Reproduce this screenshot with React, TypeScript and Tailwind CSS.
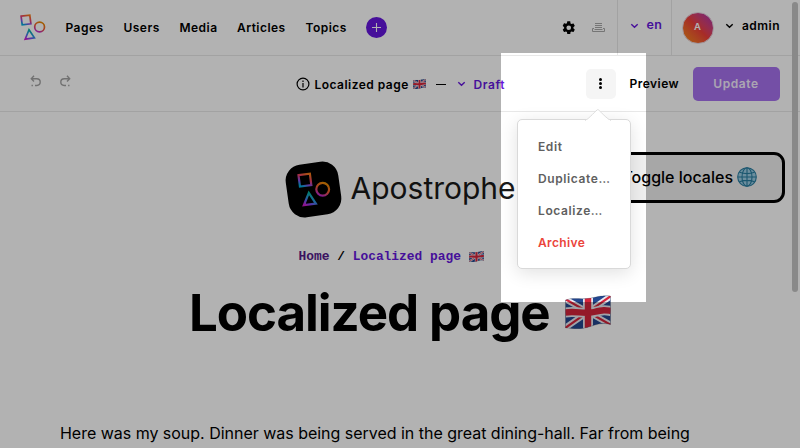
import React, { useId } from "react";

function Flag({ className }: { className: string }) {
  const id = useId();
  const wave = "M.5 5C9 2 16 5 26 3S37 .5 45.5 1V29.5C36 27 31 30 22 32.5S7 33 .5 33Z";
  return (
    <svg viewBox="0 0 46 34" className={className} preserveAspectRatio="none">
      <clipPath id={id}>
        <path d={wave} />
      </clipPath>
      <g clipPath={`url(#${id})`}>
        <rect width="46" height="34" fill="#23478f" />
        <path d="M0 4L46 30M0 33L46 1" stroke="#e9e9ef" strokeWidth="6" />
        <path d="M0 4L46 30M0 33L46 1" stroke="#d5243b" strokeWidth="2.2" />
        <path d="M23 0V34M0 17.5C12 15.5 18 19.5 29 17S40 15 46 16" fill="none" stroke="#e9e9ef" strokeWidth="10" />
        <path d="M23 0V34M0 17.5C12 15.5 18 19.5 29 17S40 15 46 16" fill="none" stroke="#d5243b" strokeWidth="6.4" />
      </g>
      <path d={wave} fill="none" stroke="#00000033" strokeWidth="0.8" />
    </svg>
  );
}

function Shapes({ className }: { className: string }) {
  const id = useId();
  return (
    <svg viewBox="0 0 26 27" className={className} fill="none" strokeWidth="1.7">
      <defs>
        <linearGradient id={`${id}s`} x1="0.8" y1="0" x2="0.3" y2="1">
          <stop stopColor="#f57a16" />
          <stop offset=".4" stopColor="#e83e68" />
          <stop offset=".72" stopColor="#8a4de8" />
          <stop offset="1" stopColor="#00a8d8" />
        </linearGradient>
        <linearGradient id={`${id}c`} x1="0.7" y1="0" x2="0.2" y2="1">
          <stop stopColor="#e78b00" />
          <stop offset=".5" stopColor="#ef5a36" />
          <stop offset="1" stopColor="#b622dd" />
        </linearGradient>
        <linearGradient id={`${id}t`} x1="0.6" y1="0" x2="0.1" y2="1">
          <stop stopColor="#00b39a" />
          <stop offset=".45" stopColor="#2995dc" />
          <stop offset=".75" stopColor="#7a4bef" />
          <stop offset="1" stopColor="#d01bcb" />
        </linearGradient>
      </defs>
      <path d="M1.1 2.2L9.8 1.1L10.9 9.8L2.2 10.9Z" stroke={`url(#${id}s)`} />
      <circle cx="19.6" cy="13" r="4.9" stroke={`url(#${id}c)`} />
      <path d="M9 15.8L14.4 23.9L5.2 25.2Z" stroke={`url(#${id}t)`} />
    </svg>
  );
}

function Chevron({ className }: { className: string }) {
  return (
    <svg viewBox="0 0 8 6" className={className} fill="none" stroke="currentColor" strokeWidth="1.4">
      <path d="M0.8 1.2L4 4.3L7.2 1.2" />
    </svg>
  );
}

function Undo({ className }: { className: string }) {
  return (
    <svg viewBox="0 0 12 12" className={className} fill="none" stroke="#a3a3a3" strokeWidth="1.4">
      <path d="M4 .8L1.3 3.7L4 6.5M1.5 3.7H6.8a3.3 3.3 0 0 1 0 6.8H5M1.5 10.5H2.9" />
    </svg>
  );
}

const nav = [
  { label: "Pages", width: "w-[58px]" },
  { label: "Users", width: "w-[56px]" },
  { label: "Media", width: "w-[57.5px]" },
  { label: "Articles", width: "w-[68.5px]" },
  { label: "Topics", width: "w-[60px]" },
];

function AdminBar() {
  return (
    <header className="flex h-14 items-center border-b border-[#e8e8e8] pl-5 text-[12px] font-[580] tracking-[0.47px]">
      <Shapes className="h-[27px] w-[26px]" />
      <nav className="ml-[19.5px] flex">
        {nav.map((item) => (
          <span key={item.label} className={item.width}>{item.label}</span>
        ))}
      </nav>
      <span className="flex size-[21px] items-center justify-center rounded-full bg-[#6516dd]">
        <svg viewBox="0 0 10 10" className="size-[9px]" stroke="#fff" strokeWidth="1.2">
          <path d="M5 0V10M0 5H10" />
        </svg>
      </span>
      <svg viewBox="0 0 24 24" className="ml-[174px] size-[15.5px] shrink-0">
        <path fillRule="evenodd" d="M19.14 12.94c.04-.3.06-.61.06-.94s-.02-.64-.07-.94l2.03-1.58a.5.5 0 0 0 .12-.61l-1.92-3.32a.5.5 0 0 0-.59-.22l-2.39.96a7 7 0 0 0-1.62-.94l-.36-2.54A.5.5 0 0 0 13.92 2h-3.84a.5.5 0 0 0-.47.41l-.36 2.54c-.59.24-1.13.57-1.62.94l-2.39-.96a.5.5 0 0 0-.59.22L2.74 8.87a.5.5 0 0 0 .12.61l2.03 1.58a7 7 0 0 0 0 1.88l-2.03 1.58a.5.5 0 0 0-.12.61l1.92 3.32c.12.22.37.29.59.22l2.39-.96c.5.38 1.03.7 1.62.94l.36 2.54c.05.24.24.41.48.41h3.84c.24 0 .44-.17.47-.41l.36-2.54a7 7 0 0 0 1.62-.94l2.39.96c.22.08.47 0 .59-.22l1.92-3.32a.5.5 0 0 0-.12-.61zM12 15.6a3.6 3.6 0 1 1 0-7.2 3.6 3.6 0 0 1 0 7.2z" />
      </svg>
      <svg viewBox="0 0 13 11" className="ml-[15.5px] h-[11px] w-[13px] shrink-0" fill="none" stroke="#a8a8a8">
        <path d="M3 1.5H10M3 3.5H10M3 5.5H10M2 6.5H.5V9.5H12.5V6.5H11M2.5 7.5H10.5" />
      </svg>
      <div className="ml-3 flex h-full w-[54px] items-center border-l border-[#e8e8e8] pb-[4px] pl-3 text-[#6516dd]">
        <Chevron className="h-[6px] w-[9px]" />
        <span className="ml-[8px] text-[12.5px]">en</span>
      </div>
      <div className="flex h-full items-center border-l border-[#e8e8e8] pl-[10px]">
        <span className="flex size-[32px] items-center justify-center rounded-full border border-[#e7d6e1] bg-linear-to-tr from-[#f28a00] via-[#ef3e38] to-[#a928ae] text-[9.5px] font-semibold tracking-normal text-white">A</span>
        <Chevron className="mb-[4px] ml-[11px] h-[6px] w-[9px]" />
        <span className="mb-[4px] ml-[8.5px] text-[12px]">admin</span>
      </div>
    </header>
  );
}

function ContextBar() {
  return (
    <div className="flex h-14 items-center border-b border-[#e8e8e8] pl-[30px] text-[12px] font-[580] tracking-[0.47px]">
      <Undo className="mb-[5px] size-[12px]" />
      <Undo className="mb-[5px] ml-[17px] size-[12px] -scale-x-100" />
      <svg viewBox="0 0 14 14" className="ml-[225px] size-[14px]" fill="none" stroke="#000" strokeWidth="1.2">
        <circle cx="7" cy="7" r="5.9" />
        <path d="M7 3.5V4.9M7 6.1V10.4" />
      </svg>
      <span className="ml-[4.5px] mt-[2px] w-[98px] whitespace-nowrap">Localized page</span>
      <Flag className="mt-px h-[10px] w-[13px]" />
      <span className="ml-[10px] mt-[2px] h-[1.5px] w-[10px] bg-black" />
      <div className="ml-[11px] flex w-[129px] items-center text-[#6516dd]">
        <Chevron className="h-[6px] w-[9px]" />
        <span className="ml-[8px] mt-[2px] tracking-[0.6px]">Draft</span>
      </div>
      <span className="flex size-[30px] shrink-0 flex-col items-center justify-center gap-[1.5px] rounded-[5px] bg-[#f5f5f5]">
        <i className="size-[2.5px] rounded-full bg-black" />
        <i className="size-[2.5px] rounded-full bg-black" />
        <i className="size-[2.5px] rounded-full bg-black" />
      </span>
      <span className="ml-[14px] w-[63px]">Preview</span>
      <button className="h-[34px] w-[87px] rounded-[5px] bg-[#a671ee] text-[12px] font-semibold tracking-[0.6px] text-[#f5edff]">Update</button>
    </div>
  );
}

function Menu() {
  return (
    <div className="absolute left-[517px] top-[119px] h-[150px] w-[114px] rounded-[5px] border border-[#d9d9d9] bg-white pl-5 pt-[11px] text-[12px] font-[600] tracking-[0.6px] text-[#606060] shadow-[0_4px_18px_rgba(0,0,0,0.12)]">
      <svg viewBox="0 0 26 12" className="absolute -top-[11px] left-[67px] h-3 w-[26px]">
        <path d="M0 11.5C3 11 12 0 13 .5S23 11 26 11.5" fill="#fff" stroke="#dedede" />
        <path d="M1 11H25V12H1Z" fill="#fff" />
      </svg>
      <div className="flex h-8 items-center">Edit</div>
      <div className="flex h-8 items-center">Duplicate…</div>
      <div className="flex h-8 items-center">Localize…</div>
      <div className="flex h-8 items-center tracking-[0.35px] text-[#eb443b]">Archive</div>
    </div>
  );
}

export default function App() {
  return (
    <div className="relative h-[448px] w-[800px] overflow-hidden bg-white font-['Inter',sans-serif] text-black">
      <AdminBar />
      <ContextBar />
      <main className="h-[336px]">
        <div className="flex h-[130px] pl-[285px] pt-[40px]">
          <div className="mt-[9px] flex size-[56px] items-center justify-center">
            <div className="flex size-[53px] shrink-0 -rotate-8 items-center justify-center rounded-[16px] bg-black">
              <Shapes className="h-[36px] w-[34px] rotate-8" />
            </div>
          </div>
          <span className="ml-[9.5px] mt-[13px] w-[185.5px] text-[30px] leading-[46px] text-[#191919]">Apostrophe</span>
          <button className="flex h-[51px] w-[249px] items-center justify-end rounded-[11px] border-3 border-black bg-[#efefef] pr-[25px] text-[16px] font-medium">
            <span className="mb-[2px]">Toggle locales</span>
            <svg viewBox="0 0 20 20" className="mb-[2px] ml-[4px] size-[20px]" fill="none" stroke="#287da0" strokeWidth="1.1">
              <circle cx="10" cy="10" r="9.3" fill="#9bcce2" />
              <path d="M10 1V19M1 10H19M2.5 5.2Q10 8 17.5 5.2M2.5 14.8Q10 12 17.5 14.8" />
              <ellipse cx="10" cy="10" rx="5" ry="9.3" />
            </svg>
          </button>
        </div>
        <div className="flex h-[30px] items-center whitespace-pre pl-[298.5px] font-['Liberation_Mono',monospace] text-[12.9px] font-bold">
          <span className="text-[#551a8b]">Home</span>
          <span> / </span>
          <span className="text-[#6516dd]">Localized page</span>
          <Flag className="mb-[2px] ml-[8px] h-[11px] w-[15px]" />
        </div>
        <div className="flex h-[84px] items-center pl-[189px]">
          <h1 className="mb-[2px] w-[376px] whitespace-nowrap text-[51px] font-bold tracking-[-1.06px]">Localized page</h1>
          <Flag className="mb-[4px] h-[34px] w-[46px]" />
        </div>
        <p className="whitespace-nowrap pl-[60px] pt-[64px] text-[16px] leading-[26px] tracking-[-0.02px]">
          Here was my soup. Dinner was being served in the great dining-hall. Far from being
        </p>
      </main>
      <Menu />
      <div className="absolute right-[2px] top-[2px] h-[290px] w-[6px] rounded-full bg-[#c5c5c5]" />
      <div className="pointer-events-none absolute left-[501px] top-[53px] h-[249px] w-[145px] shadow-[0_0_0_900px_rgba(0,0,0,0.3)]" />
    </div>
  );
}
